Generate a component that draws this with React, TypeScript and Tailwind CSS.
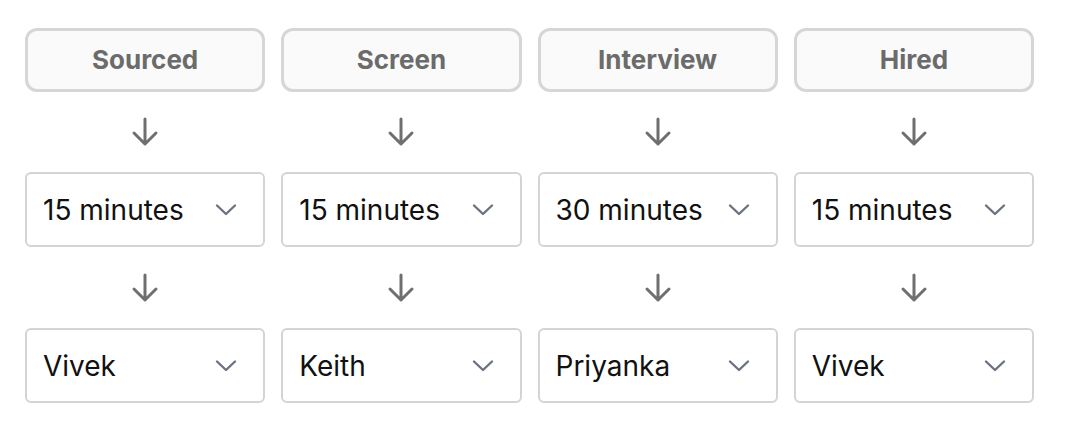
import React from "react";

const stages = [
  { name: "Sourced", time: "15 minutes", person: "Vivek" },
  { name: "Screen", time: "15 minutes", person: "Keith" },
  { name: "Interview", time: "30 minutes", person: "Priyanka" },
  { name: "Hired", time: "15 minutes", person: "Vivek" },
];

function Arrow() {
  return (
    <svg width="28" height="30" viewBox="0 0 28 30" fill="none">
      <path
        d="M14 2V27M3 16L14 27L25 16"
        stroke="#6f6f6f"
        strokeWidth="3"
        strokeLinecap="round"
        strokeLinejoin="round"
      />
    </svg>
  );
}

function Chevron() {
  return (
    <svg width="24" height="14" viewBox="0 0 24 14" fill="none">
      <path
        d="M3 2.5L12 11L21 2.5"
        stroke="#6b7280"
        strokeWidth="2.4"
        strokeLinecap="round"
        strokeLinejoin="round"
      />
    </svg>
  );
}

function Select({ value }: { value: string }) {
  return (
    <div className="flex h-[75px] w-full items-center justify-between rounded-[6px] border-2 border-[#d4d4d4] bg-white pl-[16px] pr-[25px]">
      <span className="text-[28px] leading-none text-[#111111]">{value}</span>
      <Chevron />
    </div>
  );
}

export default function App() {
  return (
    <div
      className="h-[440px] w-[1068px] bg-white pl-[25px] pt-[28px]"
      style={{ fontFamily: "Inter, 'Noto Sans', sans-serif" }}
    >
      <div className="grid w-[1009px] grid-cols-4 gap-x-[16px]">
        {stages.map((s) => (
          <div key={s.name} className="flex flex-col items-center">
            <div className="flex h-[64px] w-full items-center justify-center rounded-[12px] border-[3px] border-[#d6d6d6] bg-[#fafafa]">
              <span className="text-[26px] font-bold leading-none text-[#6b6b6b]">{s.name}</span>
            </div>
            <div className="flex h-[80px] items-center justify-center">
              <Arrow />
            </div>
            <Select value={s.time} />
            <div className="flex h-[81px] items-center justify-center">
              <Arrow />
            </div>
            <Select value={s.person} />
          </div>
        ))}
      </div>
    </div>
  );
}
